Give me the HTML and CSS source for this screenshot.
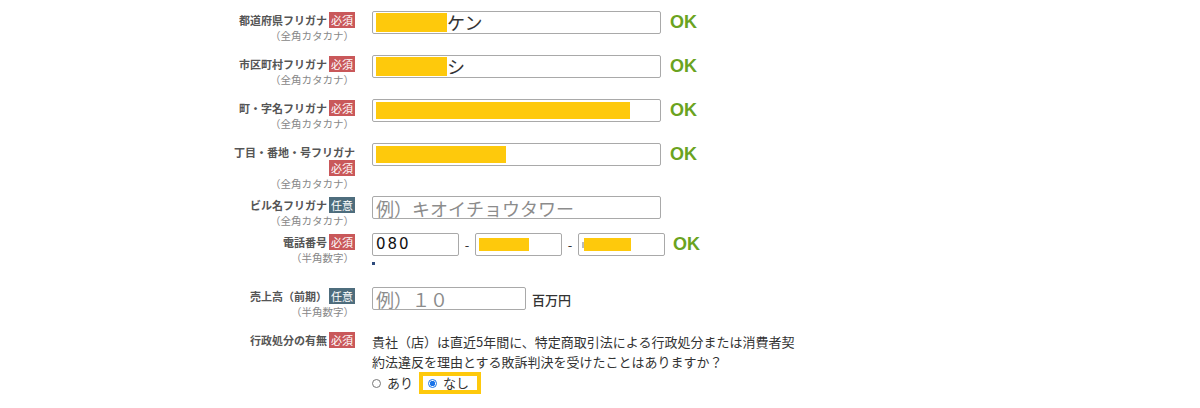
FILE: index.html
```html
<!DOCTYPE html>
<html lang="ja">
<head>
<meta charset="utf-8">
<title>フォーム</title>
<link rel="stylesheet" href="styles.css">
</head>
<body>
<div class="form">

  <div class="row tall">
    <div class="lbl">
      <div class="lbl-main">都道府県フリガナ<span class="badge req">必須</span></div>
      <div class="lbl-sub">（全角カタカナ）</div>
    </div>
    <div class="ctrl">
      <div class="field wide"><span class="mask" style="width:71px"></span><span class="val">ケン</span></div>
      <span class="ok">OK</span>
    </div>
  </div>

  <div class="row tall">
    <div class="lbl">
      <div class="lbl-main">市区町村フリガナ<span class="badge req">必須</span></div>
      <div class="lbl-sub">（全角カタカナ）</div>
    </div>
    <div class="ctrl">
      <div class="field wide"><span class="mask" style="width:71px"></span><span class="val">シ</span></div>
      <span class="ok">OK</span>
    </div>
  </div>

  <div class="row tall">
    <div class="lbl">
      <div class="lbl-main">町・字名フリガナ<span class="badge req">必須</span></div>
      <div class="lbl-sub">（全角カタカナ）</div>
    </div>
    <div class="ctrl">
      <div class="field wide"><span class="mask thin" style="width:254px"></span></div>
      <span class="ok">OK</span>
    </div>
  </div>

  <div class="row tall">
    <div class="lbl">
      <div class="lbl-main">丁目・番地・号フリガナ<span class="badge req">必須</span></div>
      <div class="lbl-sub">（全角カタカナ）</div>
    </div>
    <div class="ctrl">
      <div class="field wide"><span class="mask thin" style="width:130px"></span></div>
      <span class="ok">OK</span>
    </div>
  </div>

  <div class="row">
    <div class="lbl">
      <div class="lbl-main">ビル名フリガナ<span class="badge opt">任意</span></div>
      <div class="lbl-sub">（全角カタカナ）</div>
    </div>
    <div class="ctrl">
      <input class="field wide" type="text" placeholder="例）キオイチョウタワー">
    </div>
  </div>

  <div class="row">
    <div class="lbl">
      <div class="lbl-main">電話番号<span class="badge req">必須</span></div>
      <div class="lbl-sub">（半角数字）</div>
    </div>
    <div class="ctrl-col">
      <div class="phone">
        <div class="field tel"><span class="val digits">080</span></div>
        <span class="dash">-</span>
        <div class="field tel"><span class="mask small" style="width:50px"></span></div>
        <span class="dash">-</span>
        <div class="field tel"><span class="sliver"></span><span class="mask small" style="width:47px"></span></div>
        <span class="ok">OK</span>
      </div>
      <span class="dot"></span>
    </div>
  </div>

  <div class="row tall">
    <div class="lbl">
      <div class="lbl-main">売上高（前期）<span class="badge opt">任意</span></div>
      <div class="lbl-sub">（半角数字）</div>
    </div>
    <div class="ctrl">
      <input class="field sales" type="text" placeholder="例）１０">
      <span class="unit">百万円</span>
    </div>
  </div>

  <div class="row">
    <div class="lbl">
      <div class="lbl-main">行政処分の有無<span class="badge req">必須</span></div>
    </div>
    <div class="question">
      <p class="q-text">貴社（店）は直近5年間に、特定商取引法による行政処分または消費者契約法違反を理由とする敗訴判決を受けたことはありますか？</p>
      <div class="radios">
        <label class="radio"><span class="circle"></span>あり</label>
        <label class="radio highlight"><span class="circle checked"></span>なし</label>
      </div>
    </div>
  </div>

</div>
</body>
</html>
```

FILE: styles.css
```css
* { box-sizing: border-box; }

body {
  margin: 0;
  background: #fff;
  font-family: "Noto Sans CJK JP", "Noto Sans", sans-serif;
  color: #333;
}

.form {
  margin-left: 230px;
  padding-top: 11px;
  width: 600px;
}

.row {
  display: flex;
  gap: 17px;
  align-items: flex-start;
}

.row.tall { min-height: 44px; }

.lbl {
  width: 125px;
  flex: none;
  text-align: right;
  padding-top: 1px;
  padding-bottom: 5px;
}

.lbl-main {
  font-size: 11px;
  line-height: 16px;
  font-weight: bold;
  color: #555;
}

.lbl-sub {
  font-size: 10.5px;
  line-height: 15px;
  color: #888;
  padding-right: 1px;
}

.badge {
  display: inline-block;
  vertical-align: top;
  margin-left: 2px;
  padding: 0 2px;
  height: 16px;
  line-height: 16px;
  font-size: 11px;
  font-weight: normal;
  color: #fff;
}

.badge.req { background: #c9585a; }
.badge.opt { background: #4e6d7d; }

.ctrl {
  display: flex;
  align-items: flex-start;
  gap: 9px;
}

.field {
  display: flex;
  align-items: center;
  height: 23px;
  padding: 0 3px;
  border: 1px solid #a9a9a9;
  border-radius: 2px;
  background: #fff;
  font-family: "Noto Sans CJK JP", sans-serif;
  font-size: 18px;
  color: #333;
  outline: none;
}

.field.wide { width: 289px; }
.field.tel { width: 87px; }
.field.sales { width: 154px; }

.field::placeholder {
  color: #8c8c8c;
}

.mask {
  display: inline-block;
  height: 19px;
  background: #fec90c;
}

.mask.thin { height: 17px; }
.mask.small { height: 13px; }

.val {
  line-height: 21px;
  color: #333;
}

.val.digits {
  font-family: "DejaVu Sans", sans-serif;
  font-size: 15px;
  letter-spacing: 2px;
  color: #111;
}

.sliver {
  display: inline-block;
  width: 2px;
  height: 6px;
  background: #bbb;
}

.ok {
  font-family: "Liberation Sans", Arial, sans-serif;
  font-size: 18px;
  line-height: 23px;
  font-weight: bold;
  color: #6aa320;
}

.ctrl-col {
  display: flex;
  flex-direction: column;
  align-items: flex-start;
  padding-bottom: 22px;
}

.phone {
  display: flex;
  align-items: center;
}

.dash {
  width: 16px;
  text-align: center;
  font-size: 13px;
  color: #333;
}

.phone .ok { margin-left: 8px; }

.dot {
  margin-top: 6px;
  width: 3px;
  height: 3px;
  background: #2d4a7c;
}

.unit {
  align-self: flex-end;
  margin-left: -3px;
  font-size: 13px;
  font-weight: 500;
  color: #333;
  line-height: 20px;
}

.question {
  padding-top: 1px;
}

.q-text {
  margin: 0;
  width: 432px;
  font-size: 13px;
  line-height: 20px;
  color: #333;
}

.radios {
  display: flex;
  align-items: center;
  gap: 6px;
  margin-top: 0;
}

.radio {
  display: flex;
  align-items: center;
  gap: 6px;
  font-size: 13px;
  line-height: 14px;
  color: #333;
}

.radio.highlight {
  border: 4px solid #fec90c;
  padding: 0 8px 0 5px;
  height: 22px;
}

.circle {
  display: inline-block;
  width: 9px;
  height: 9px;
  border: 1px solid #777;
  border-radius: 50%;
  background: #fff;
}

.circle.checked {
  border-color: #1a73e8;
  background: radial-gradient(circle, #1a73e8 0 2.5px, #fff 3px);
}
```
